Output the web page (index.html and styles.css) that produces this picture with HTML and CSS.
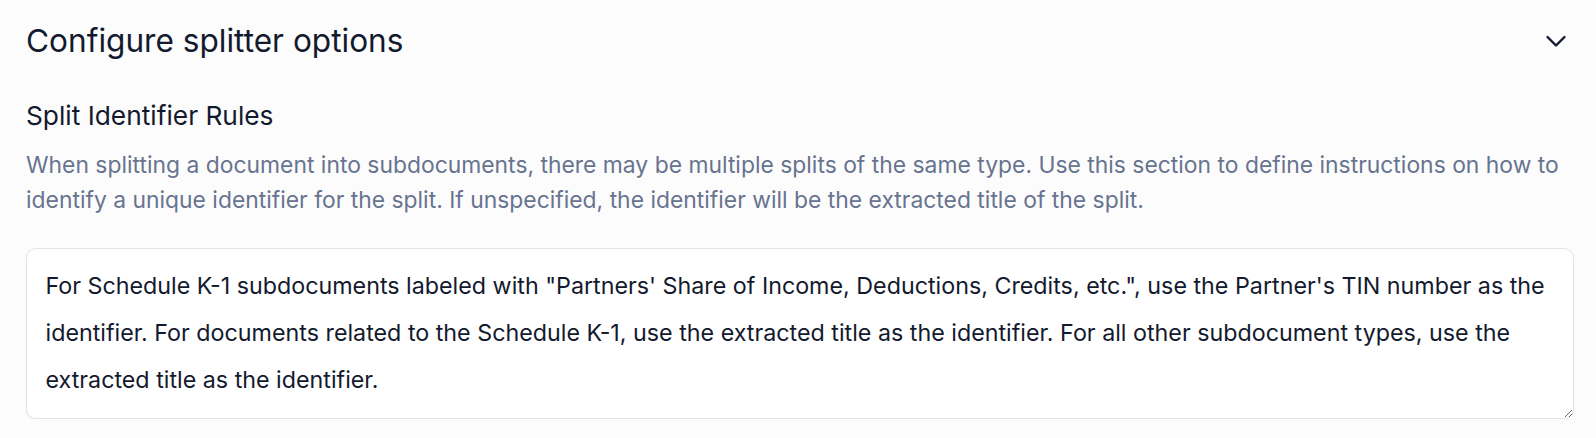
FILE: index.html
```html
<!DOCTYPE html>
<html>
<head>
<meta charset="utf-8">
<link rel="stylesheet" href="styles.css">
</head>
<body>
<section class="panel">
  <div class="panel-header">
    <h2 class="panel-title">Configure splitter options</h2>
    <button class="toggle" aria-label="Collapse">
      <svg width="24" height="24" viewBox="0 0 24 24" fill="none"><path d="M3.5 8l8.5 8.5L20.5 8" stroke="#141a2e" stroke-width="2.4" stroke-linecap="round" stroke-linejoin="round"/></svg>
    </button>
  </div>
  <div class="field">
    <h3 class="field-title">Split Identifier Rules</h3>
    <p class="field-desc">When splitting a document into subdocuments, there may be multiple splits of the same type. Use this section to define instructions on how to identify a unique identifier for the split. If unspecified, the identifier will be the extracted title of the split.</p>
    <textarea class="field-input">For Schedule K-1 subdocuments labeled with "Partners' Share of Income, Deductions, Credits, etc.", use the Partner's TIN number as the identifier. For documents related to the Schedule K-1, use the extracted title as the identifier. For all other subdocument types, use the extracted title as the identifier.</textarea>
  </div>
</section>
</body>
</html>
```
FILE: styles.css
```css
* { box-sizing: border-box; }
html, body { margin: 0; padding: 0; background: #fcfcfd; }
body { font-family: Inter, "Noto Sans", sans-serif; color: #141a2e; }
.panel { padding: 0 22px 0 26px; }
.panel-header {
  display: flex;
  align-items: center;
  justify-content: space-between;
  height: 82px;
}
.panel-title {
  margin: 0;
  font-size: 31.6px;
  line-height: 40px;
  font-weight: 400;
  color: #141a2e;
}
.toggle {
  background: none;
  border: 0;
  padding: 0;
  display: flex;
  margin-right: 6px;
}
.field { display: flex; flex-direction: column; }
.field-title {
  margin: 18px 0 0;
  font-size: 26.3px;
  font-weight: 400;
  line-height: 32px;
  color: #141a2e;
}
.field-desc {
  margin: 16px 0 0;
  font-size: 22.88px;
  line-height: 35px;
  color: #68748f;
}
.field-input {
  margin-top: 30px;
  width: 100%;
  height: 171px;
  padding: 13px 20px 0 18.5px;
  font-family: Inter, "Noto Sans", sans-serif;
  font-size: 23.27px;
  line-height: 47px;
  color: #141a2e;
  background: #fff;
  border: 1.5px solid #e4e5ea;
  border-radius: 10px;
  box-shadow: 0 1px 2px rgba(16, 24, 40, 0.05);
  outline: none;
  resize: vertical;
}
```
